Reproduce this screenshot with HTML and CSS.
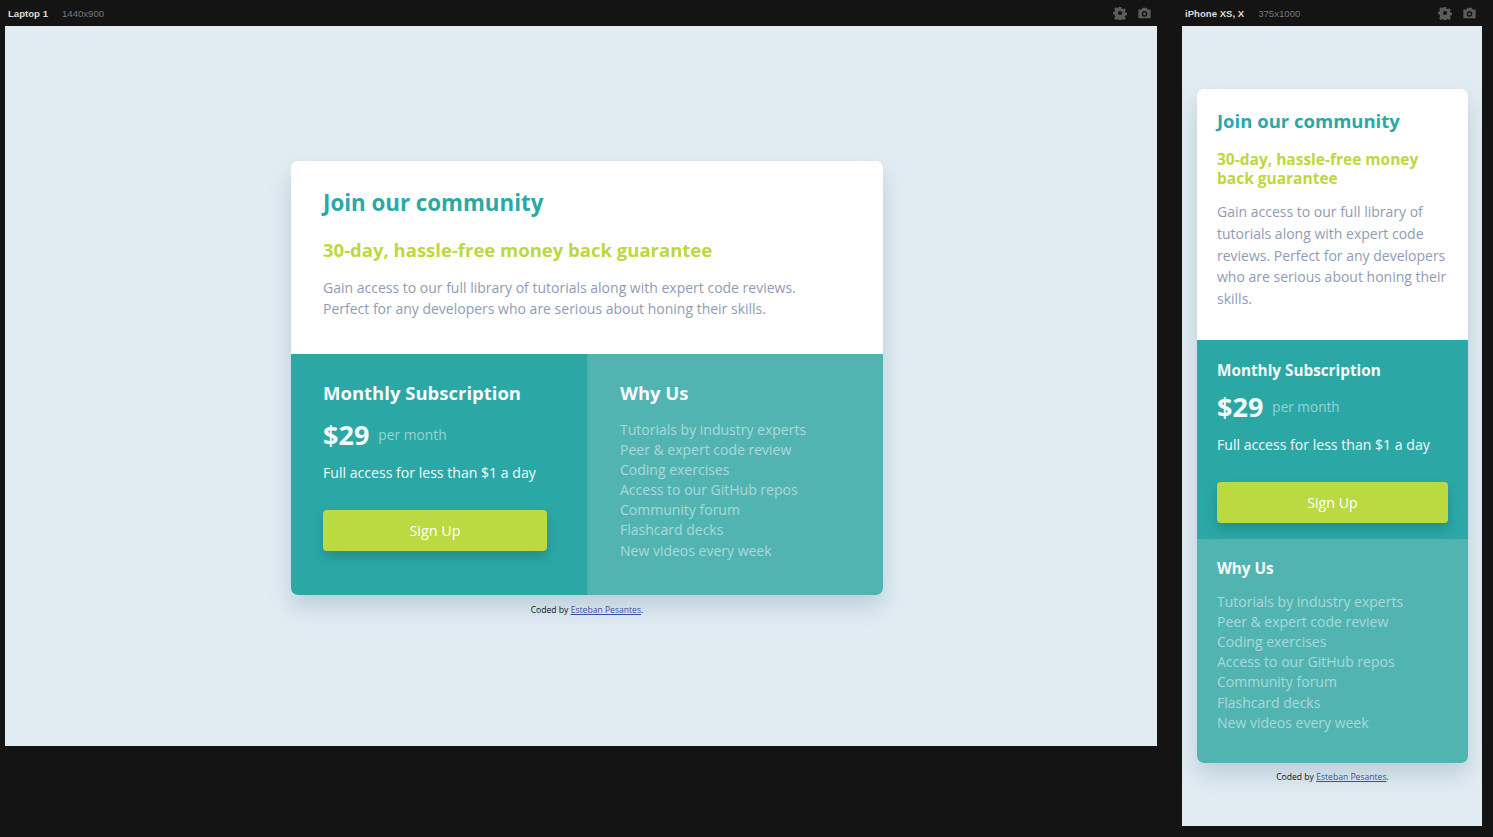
FILE: index.html
```html
<!DOCTYPE html>
<html lang="en">
<head>
<meta charset="utf-8">
<title>Responsive viewer</title>
<link rel="stylesheet" href="styles.css">
</head>
<body>
<div class="app">
  <section class="device device-laptop">
    <header class="device-bar">
      <span class="device-name">Laptop 1</span>
      <span class="device-size">1440x900</span>
      <span class="device-tools">
        <svg class="tool" viewBox="0 0 16 16" width="14" height="14"><path fill="#5c5c5c" d="M6.6 1h2.8l.4 2 1.2.6 1.7-1.1 2 2-1.1 1.7.6 1.2 2 .4v2.8l-2 .4-.6 1.2 1.1 1.7-2 2-1.7-1.1-1.2.6-.4 2H6.6l-.4-2-1.2-.6-1.7 1.1-2-2 1.1-1.7L1.8 9.8l-2-.4V6.6l2-.4.6-1.2-1.1-1.7 2-2 1.7 1.1 1.2-.6zM8 5.6A2.4 2.4 0 1 0 8 10.4 2.4 2.4 0 1 0 8 5.6z"/></svg>
        <svg class="tool" viewBox="0 0 16 16" width="15" height="14"><path fill="#5c5c5c" fill-rule="evenodd" d="M1 4h3.5l1.2-2h4.6l1.2 2H15v10H1zM8 5.8a3.2 3.2 0 1 0 0 6.4 3.2 3.2 0 1 0 0-6.4zm0 1.6a1.6 1.6 0 1 1 0 3.2 1.6 1.6 0 1 1 0-3.2z"/></svg>
      </span>
    </header>
    <div class="viewport viewport-laptop">
      <article class="card">
        <div class="card-top">
          <h1 class="title">Join our community</h1>
          <h2 class="guarantee">30-day, hassle-free money back guarantee</h2>
          <p class="intro">Gain access to our full library of tutorials along with expert code reviews.<br>Perfect for any developers who are serious about honing their skills.</p>
        </div>
        <div class="card-bottom">
          <div class="sub">
            <h3 class="sub-title">Monthly Subscription</h3>
            <div class="price"><span class="amount">$29</span><span class="per">per month</span></div>
            <p class="access">Full access for less than $1 a day</p>
            <a class="signup" href="#">Sign Up</a>
          </div>
          <div class="why">
            <h3 class="sub-title">Why Us</h3>
            <ul class="why-list">
              <li>Tutorials by industry experts</li>
              <li>Peer &amp; expert code review</li>
              <li>Coding exercises</li>
              <li>Access to our GitHub repos</li>
              <li>Community forum</li>
              <li>Flashcard decks</li>
              <li>New videos every week</li>
            </ul>
          </div>
        </div>
      </article>
      <p class="credit">Coded by <a href="#">Esteban Pesantes</a>.</p>
    </div>
  </section>

  <section class="device device-phone">
    <header class="device-bar">
      <span class="device-name">iPhone XS, X</span>
      <span class="device-size">375x1000</span>
      <span class="device-tools">
        <svg class="tool" viewBox="0 0 16 16" width="14" height="14"><path fill="#5c5c5c" d="M6.6 1h2.8l.4 2 1.2.6 1.7-1.1 2 2-1.1 1.7.6 1.2 2 .4v2.8l-2 .4-.6 1.2 1.1 1.7-2 2-1.7-1.1-1.2.6-.4 2H6.6l-.4-2-1.2-.6-1.7 1.1-2-2 1.1-1.7L1.8 9.8l-2-.4V6.6l2-.4.6-1.2-1.1-1.7 2-2 1.7 1.1 1.2-.6zM8 5.6A2.4 2.4 0 1 0 8 10.4 2.4 2.4 0 1 0 8 5.6z"/></svg>
        <svg class="tool" viewBox="0 0 16 16" width="15" height="14"><path fill="#5c5c5c" fill-rule="evenodd" d="M1 4h3.5l1.2-2h4.6l1.2 2H15v10H1zM8 5.8a3.2 3.2 0 1 0 0 6.4 3.2 3.2 0 1 0 0-6.4zm0 1.6a1.6 1.6 0 1 1 0 3.2 1.6 1.6 0 1 1 0-3.2z"/></svg>
      </span>
    </header>
    <div class="viewport viewport-phone">
      <article class="card card-m">
        <div class="card-top">
          <h1 class="title">Join our community</h1>
          <h2 class="guarantee">30-day, hassle-free money back guarantee</h2>
          <p class="intro">Gain access to our full library of<br>tutorials along with expert code<br>reviews. Perfect for any developers<br>who are serious about honing their<br>skills.</p>
        </div>
        <div class="sub">
          <h3 class="sub-title">Monthly Subscription</h3>
          <div class="price"><span class="amount">$29</span><span class="per">per month</span></div>
          <p class="access">Full access for less than $1 a day</p>
          <a class="signup" href="#">Sign Up</a>
        </div>
        <div class="why">
          <h3 class="sub-title">Why Us</h3>
          <ul class="why-list">
            <li>Tutorials by industry experts</li>
            <li>Peer &amp; expert code review</li>
            <li>Coding exercises</li>
            <li>Access to our GitHub repos</li>
            <li>Community forum</li>
            <li>Flashcard decks</li>
            <li>New videos every week</li>
          </ul>
        </div>
      </article>
      <p class="credit">Coded by <a href="#">Esteban Pesantes</a>.</p>
    </div>
  </section>
</div>
</body>
</html>
```

FILE: styles.css
```css
* { box-sizing: border-box; }

html, body {
  margin: 0;
  padding: 0;
  background: #141414;
  height: 100%;
}

body {
  font-family: "Open Sans", "Liberation Sans", sans-serif;
}

.app {
  display: flex;
  align-items: flex-start;
  gap: 25px;
  padding-left: 5px;
}

.device {
  display: flex;
  flex-direction: column;
}

.device-bar {
  height: 26px;
  display: flex;
  align-items: center;
  font-family: "Liberation Sans", Arial, sans-serif;
  font-size: 9.6px;
  padding-left: 3px;
}

.device-name {
  color: #dcdcdc;
  font-weight: bold;
  margin-right: 14px;
}

.device-size {
  color: #777;
}

.device-tools {
  margin-left: auto;
  display: flex;
  align-items: center;
  gap: 10px;
  padding-right: 5px;
}

.tool { display: block; }

.viewport {
  background: #e1ecf2;
  display: flex;
  flex-direction: column;
  align-items: center;
}

.viewport-laptop {
  width: 1152px;
  height: 720px;
  justify-content: center;
  padding-top: 4px;
  padding-left: 12px;
}

.viewport-phone {
  width: 300px;
  height: 800px;
  padding: 63px 14px 0 15px;
  align-items: stretch;
}

.card {
  background: #fff;
  border-radius: 7px;
  overflow: hidden;
  box-shadow: 0 12px 22px rgba(60, 100, 130, 0.22);
}

.viewport-laptop .card { width: 592px; }

.card h1, .card h2, .card h3, .card p, .card ul {
  margin: 0;
}

.title {
  color: #2aa8a6;
  font-weight: 700;
}

.guarantee {
  color: #bcd83e;
  font-weight: 700;
}

.intro {
  color: #8f9bb6;
}

.card-bottom {
  display: grid;
  grid-template-columns: 1fr 1fr;
}

.sub {
  background: #2ba8a6;
  color: #f4f9fa;
}

.why {
  background: #52b4b1;
  color: #f4f9fa;
}

.sub-title { font-weight: 700; }

.price {
  display: flex;
  align-items: center;
}

.amount { font-weight: 700; }

.per { color: rgba(255, 255, 255, 0.5); }

.signup {
  display: flex;
  align-items: center;
  justify-content: center;
  height: 41px;
  background: #bbd941;
  color: #fff;
  text-decoration: none;
  border-radius: 4px;
  box-shadow: 0 6px 12px rgba(20, 80, 80, 0.3);
}

.why-list {
  list-style: none;
  padding: 0;
  color: rgba(255, 255, 255, 0.5);
}

/* laptop sizes */
.viewport-laptop .card-top { padding: 28px 32px 35px; }
.viewport-laptop .title { font-size: 22.3px; line-height: 28px; }
.viewport-laptop .guarantee { font-size: 18.5px; line-height: 22px; margin-top: 22px; }
.viewport-laptop .intro { font-size: 14px; line-height: 21px; margin-top: 16px; }
.viewport-laptop .sub { padding: 28px 40px 44px 32px; }
.viewport-laptop .why { padding: 28px 32px 30px; border-left: 1px solid #45aeab; }
.viewport-laptop .sub-title { font-size: 18.5px; line-height: 22px; }
.viewport-laptop .price { margin-top: 16px; height: 30px; }
.viewport-laptop .amount { font-size: 27px; margin-right: 9px; }
.viewport-laptop .per { font-size: 13.8px; }
.viewport-laptop .access { font-size: 14.1px; line-height: 18px; margin-top: 14px; }
.viewport-laptop .signup { margin-top: 28px; font-size: 14.4px; width: 224px; }
.viewport-laptop .why-list { margin-top: 16px; font-size: 14px; line-height: 20.17px; }

/* phone sizes */
.card-m .card-top { padding: 20px 8px 30px 20px; }
.card-m .title { font-size: 18.5px; line-height: 24px; }
.card-m .guarantee { font-size: 15.5px; line-height: 19px; margin-top: 17px; padding-right: 12px; }
.card-m .intro { font-size: 14px; line-height: 21.75px; margin-top: 13px; white-space: nowrap; }
.card-m .sub { padding: 20px 20px 16px; }
.card-m .why { padding: 19px 20px 30px; }
.card-m .sub-title { font-size: 15.3px; line-height: 20px; }
.card-m .price { margin-top: 13px; height: 28px; }
.card-m .amount { font-size: 27px; margin-right: 9px; }
.card-m .per { font-size: 13.6px; }
.card-m .access { font-size: 14.1px; line-height: 18px; margin-top: 15px; }
.card-m .signup { margin-top: 28px; font-size: 14.2px; }
.card-m .why-list { margin-top: 14px; font-size: 14px; line-height: 20.17px; }

.credit {
  margin: 9px 0 0;
  font-family: "Open Sans", "Liberation Sans", sans-serif;
  font-size: 8.6px;
  color: #111;
  text-align: center;
}

.card-m + .credit { margin-top: 8px; }

.credit a { color: #3b4fa0; }
```
